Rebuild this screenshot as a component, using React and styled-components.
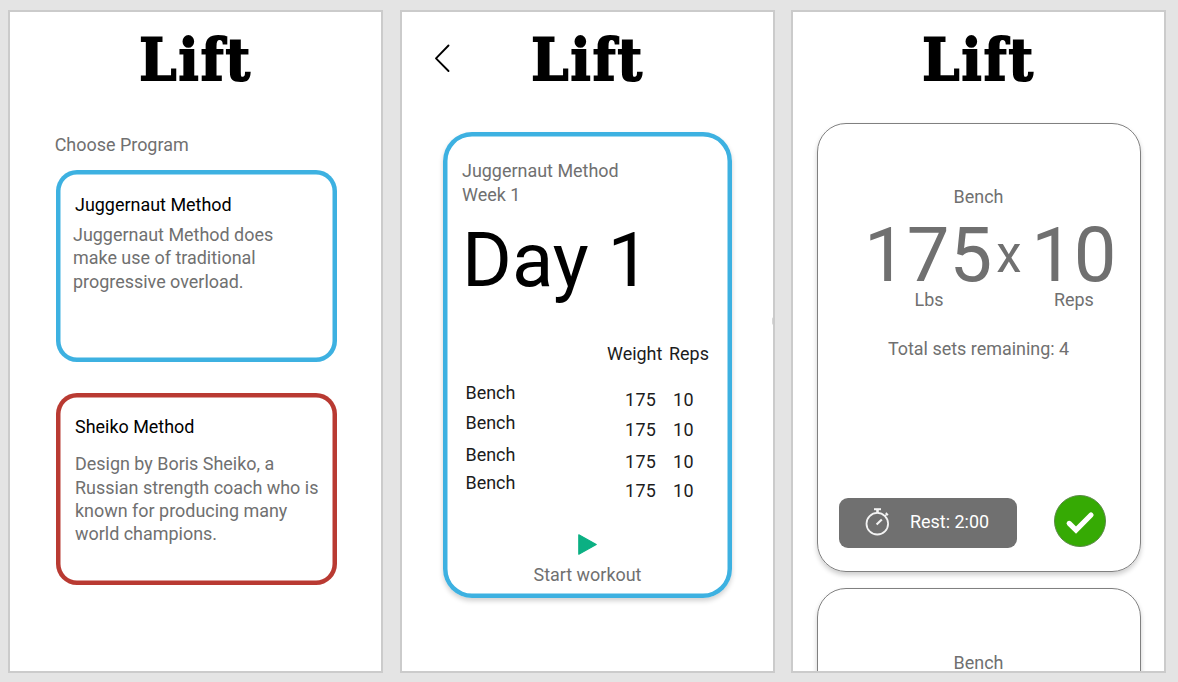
import React from "react";
import styled, { createGlobalStyle } from "styled-components";

const GlobalStyle = createGlobalStyle`
  * { box-sizing: border-box; }
  body {
    margin: 0;
    background: #e4e4e4;
    font-family: Roboto, "Liberation Sans", sans-serif;
    font-size: 17.94px;
    line-height: 24px;
    color: #707070;
  }
`;

const Board = styled.main`
  display: grid;
  grid-template-columns: 392px 391px 375px;
  width: 1178px;
  height: 682px;
  padding: 10px 0 0 8px;
  overflow: hidden;
`;

const Screen = styled.section`
  position: relative;
  display: flex;
  flex-direction: column;
  width: 375px;
  height: 663px;
  border: 2px solid #cbcbcb;
  background: #fff;
  overflow: hidden;
`;

const Header = styled.header`
  position: relative;
  flex: none;
  display: flex;
  justify-content: center;
  height: 96px;
`;

const Logo = styled.h1`
  margin: 0;
  font: bold 58px/97px "DejaVu Serif", serif;
  letter-spacing: 2.2px;
  -webkit-text-stroke: 1.9px #000;
  color: #000;
  transform: scaleX(0.915);
`;

const BackButton = styled.a`
  position: absolute;
  left: 32px;
  top: 31px;
  width: 18px;
  height: 30px;
  svg { display: block; }
`;

const ScrollMark = styled.i`
  position: absolute;
  right: -1px;
  top: ${(p) => p.$top}px;
  width: 2px;
  height: 8px;
  border-radius: 2px 0 0 2px;
  background: #d6d6d6;
`;

const SectionLabel = styled.div`
  margin: 25px 0 13px 44.7px;
`;

const Programs = styled.div`
  display: flex;
  flex-direction: column;
  gap: 30.5px;
  padding-left: 46px;
`;

const ProgramCard = styled.article`
  width: 281px;
  height: 192px;
  padding: ${(p) => p.$top}px 0 0 19px;
  border-radius: 21px;
  box-shadow: inset 0 0 0 4.5px ${(p) => p.$color};
`;

const ProgramName = styled.div`
  color: #000;
`;

const ProgramText = styled.p`
  margin: ${(p) => p.$gap}px 0 0 ${(p) => p.$shift || 0}px;
  line-height: ${(p) => p.$leading}px;
  white-space: pre-line;
`;

const DayCard = styled.article`
  display: flex;
  flex-direction: column;
  width: 289px;
  height: 466px;
  margin: 24px 0 0 41px;
  padding: 27px 19px 0;
  border-radius: 29px;
  box-shadow: inset 0 0 0 4.5px #3db1e1, 0 3px 5px rgba(0, 0, 0, 0.18);
`;

const DayTitle = styled.h2`
  margin: 13px 0 42px;
  font-size: 76px;
  font-weight: 400;
  line-height: 80px;
  color: #000;
`;

const TableRow = styled.div`
  display: grid;
  grid-template-columns: 145px 62px 1fr;
  height: ${(p) => p.$height || 24}px;
  color: #1c1c1c;
`;

const ExerciseRows = styled.div`
  margin: 15px 0 38.5px;
`;

const ExerciseName = styled.span`
  padding-left: 3.5px;
`;

const Figure = styled.span`
  padding: ${(p) => p.$drop}px 0 0 ${(p) => p.$indent}px;
  letter-spacing: 0.3px;
`;

const StartButton = styled.div`
  display: flex;
  flex-direction: column;
  align-items: center;
  gap: 8px;
  svg { display: block; }
`;

const SetCard = styled.article`
  flex: none;
  width: 324px;
  height: 449px;
  margin: 0 0 16px 24px;
  padding-top: ${(p) => p.$top}px;
  border: 1px solid #808080;
  border-radius: 29px;
  box-shadow: 0 3px 5px rgba(0, 0, 0, 0.2);
`;

const SetList = styled.div`
  display: flex;
  flex-direction: column;
  padding-top: 15px;
`;

const Centered = styled.div`
  text-align: center;
  padding-right: 1px;
  margin-top: ${(p) => p.$gap || 0}px;
`;

const SetFigures = styled.div`
  display: flex;
  margin: 1px 0 0 46px;
`;

const BigFigure = styled.div`
  display: flex;
  flex-direction: column;
  align-items: center;
  strong {
    font-size: 76px;
    font-weight: 400;
    line-height: 90px;
  }
  span {
    line-height: 24px;
    margin-top: -12px;
    padding-left: ${(p) => p.$nudge || 0}px;
  }
`;

const Times = styled.div`
  width: 39px;
  padding-left: 4px;
  font-size: 51px;
  line-height: 90px;
  height: 90px;
`;

const Actions = styled.div`
  display: flex;
  justify-content: space-between;
  margin-top: 134px;
  padding: 0 34px 0 21px;
`;

const RestButton = styled.div`
  display: flex;
  align-items: center;
  gap: 20px;
  width: 178px;
  height: 50px;
  margin-top: 2.5px;
  padding: 0 0 1.5px 26px;
  border-radius: 9px;
  background: #707070;
  color: #fff;
`;

const DoneButton = styled.div`
  width: 52px;
  height: 52px;
  border: 1px solid #5b8a48;
  border-radius: 50%;
  background: #36aa04;
  svg { display: block; }
`;

const BackIcon = () => (
  <svg width="18" height="30" viewBox="0 0 18 30">
    <path d="M14.5 2.5 2 15.3 14.5 28" fill="none" stroke="#000" strokeWidth="1.9" strokeLinecap="round" strokeLinejoin="round" />
  </svg>
);

const PlayIcon = () => (
  <svg width="19" height="21" viewBox="0 0 19 21">
    <path d="M.8.8 18.2 10.5.8 20.2Z" fill="#0bb083" stroke="#0bb083" strokeWidth="1.2" strokeLinejoin="round" />
  </svg>
);

const TimerIcon = () => (
  <svg width="25" height="28" viewBox="0 0 25 28" fill="none" stroke="#f4f4f4">
    <circle cx="12.3" cy="15.7" r="10.8" strokeWidth="1.8" />
    <path d="M9 1.2h7" strokeWidth="2" />
    <path d="M12.5 1.5v3.5" strokeWidth="2.6" />
    <path d="M20 8l2-2M20.8 4.9l2.2 2.2" strokeWidth="1.6" />
    <path d="M11.6 16.6 16.8 11.4" strokeWidth="2.1" />
  </svg>
);

const CheckIcon = () => (
  <svg width="50" height="50" viewBox="0 0 50 50">
    <path d="M14.2 27.4 21 34 36 19" fill="none" stroke="#fff" strokeWidth="5.2" strokeLinecap="round" />
  </svg>
);

const exercises = [
  { name: "Bench", weight: 175, reps: 10, height: 30, drop: 7 },
  { name: "Bench", weight: 175, reps: 10, height: 32, drop: 7 },
  { name: "Bench", weight: 175, reps: 10, height: 28, drop: 7 },
  { name: "Bench", weight: 175, reps: 10, height: 24, drop: 8 },
];

export default function App() {
  return (
    <>
      <GlobalStyle />
      <Board>
        <Screen>
          <Header><Logo>Lift</Logo></Header>
          <SectionLabel>Choose Program</SectionLabel>
          <Programs>
            <ProgramCard $color="#3db1e1" $top={23}>
              <ProgramName>Juggernaut Method</ProgramName>
              <ProgramText $gap={6} $shift={-2} $leading={23.4}>
                {"Juggernaut Method does\nmake use of traditional\nprogressive overload."}
              </ProgramText>
            </ProgramCard>
            <ProgramCard $color="#b93a32" $top={22}>
              <ProgramName>Sheiko Method</ProgramName>
              <ProgramText $gap={13.9} $leading={23.3}>
                {"Design by Boris Sheiko, a\nRussian strength coach who is\nknown for producing many\nworld champions."}
              </ProgramText>
            </ProgramCard>
          </Programs>
        </Screen>

        <Screen>
          <Header>
            <BackButton aria-label="Back"><BackIcon /></BackButton>
            <Logo>Lift</Logo>
          </Header>
          <DayCard>
            <div>Juggernaut Method</div>
            <div>Week 1</div>
            <DayTitle>Day 1</DayTitle>
            <TableRow>
              <span>{" "}</span>
              <span>Weight</span>
              <span>Reps</span>
            </TableRow>
            <ExerciseRows>
              {exercises.map((e, i) => (
                <TableRow key={i} $height={e.height}>
                  <ExerciseName>{e.name}</ExerciseName>
                  <Figure $indent={18} $drop={e.drop}>{e.weight}</Figure>
                  <Figure $indent={4} $drop={e.drop}>{e.reps}</Figure>
                </TableRow>
              ))}
            </ExerciseRows>
            <StartButton>
              <PlayIcon />
              <span>Start workout</span>
            </StartButton>
          </DayCard>
          <ScrollMark $top={305} />
        </Screen>

        <Screen>
          <Header><Logo>Lift</Logo></Header>
          <SetList>
            <SetCard $top={61}>
              <Centered>Bench</Centered>
              <SetFigures>
                <BigFigure $nudge={2}><strong>175</strong><span>Lbs</span></BigFigure>
                <Times>x</Times>
                <BigFigure><strong>10</strong><span>Reps</span></BigFigure>
              </SetFigures>
              <Centered $gap={25}>Total sets remaining: 4</Centered>
              <Actions>
                <RestButton><TimerIcon />Rest: 2:00</RestButton>
                <DoneButton><CheckIcon /></DoneButton>
              </Actions>
            </SetCard>
            <SetCard $top={62}>
              <Centered>Bench</Centered>
            </SetCard>
          </SetList>
        </Screen>
      </Board>
    </>
  );
}
